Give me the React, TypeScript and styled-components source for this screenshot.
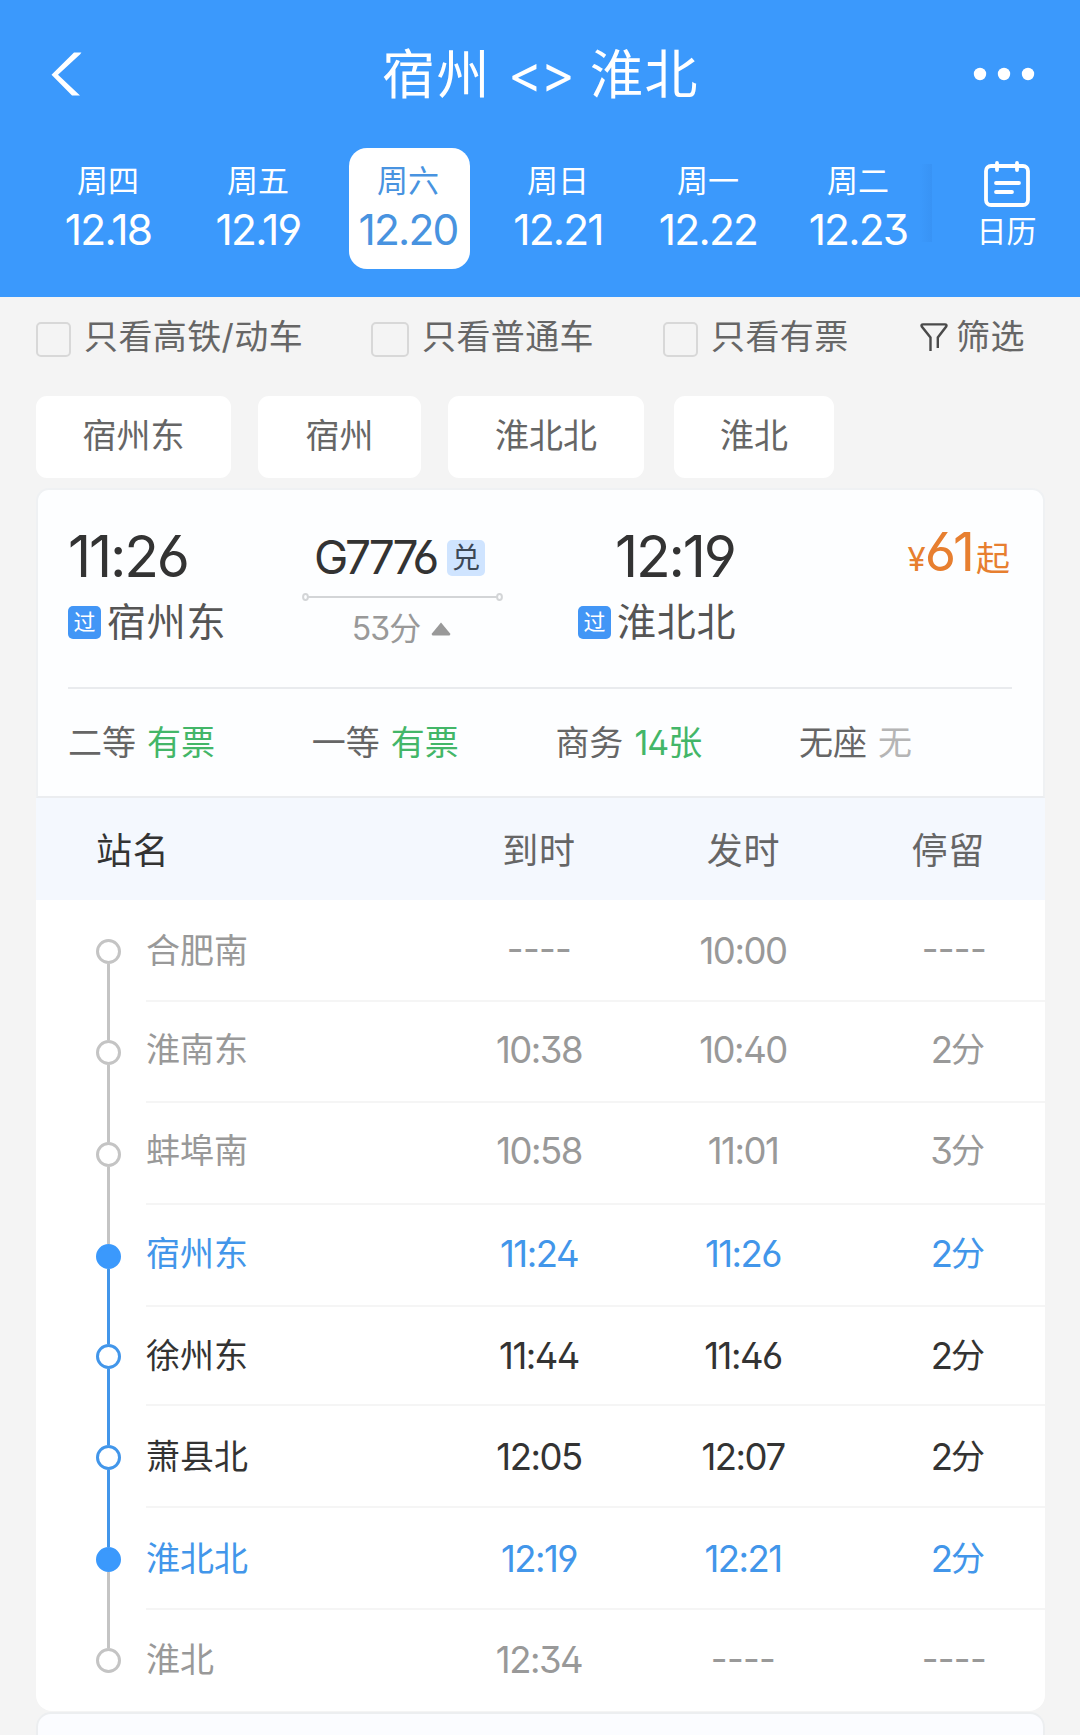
import React from "react";
import styled, { createGlobalStyle } from "styled-components";

const BLUE = "#3b99fc";

const GlobalStyle = createGlobalStyle`
  *, *::before, *::after { box-sizing: border-box; }
  html, body { margin: 0; padding: 0; background: #f4f4f4; }
  body {
    width: 1080px;
    height: 1735px;
    overflow: hidden;
    font-family: Inter, "Noto Sans CJK SC", sans-serif;
    font-feature-settings: "ss01" 1;
    color: #333;
  }
  svg { flex: none; }
`;

const Page = styled.div`
  width: 1080px;
  height: 1735px;
  overflow: hidden;
  display: flex;
  flex-direction: column;
  background: #f4f4f4;

  > * { flex: none; }
`;

const Header = styled.header`
  height: 297px;
  background: ${BLUE};
  color: #fff;
`;

const TitleBar = styled.div`
  height: 148px;
  padding: 0 44px 0 50px;
  display: grid;
  grid-template-columns: 64px 1fr 64px;
  align-items: center;
`;

const Title = styled.h1`
  margin: 0;
  padding: 2px 5px 0 0;
  display: flex;
  justify-content: center;
  align-items: center;
  gap: 17px;
  font-size: 53px;
  line-height: 80px;
  font-weight: 400;
  letter-spacing: 1.5px;
`;

const Arrows = styled.span`
  padding-bottom: 3px;
  font-size: 52px;
  letter-spacing: -2px;
`;

const DateBar = styled.div`
  height: 121px;
  display: flex;
  padding-left: 34px;
`;

const DateCell = styled.div`
  width: 150px;
  flex: none;
  display: flex;
  justify-content: center;
`;

const DateBox = styled.div<{ $active?: boolean }>`
  width: 121px;
  height: 121px;
  border-radius: 18px;
  padding: 12px 2px 0 0;
  display: flex;
  flex-direction: column;
  align-items: center;
  background: ${(p) => (p.$active ? "#fff" : "transparent")};
  color: ${(p) => (p.$active ? "#4893e0" : "#fff")};
`;

const Weekday = styled.span`
  font-size: 31px;
  line-height: 41px;
`;

const DayNumber = styled.span`
  font-size: 42.5px;
  font-weight: 390;
  line-height: 58px;
  letter-spacing: -1.8px;
  white-space: nowrap;
`;

const CalendarButton = styled.div`
  flex: 1;
  padding: 13px 0 0 1px;
  display: flex;
  flex-direction: column;
  align-items: center;
  font-size: 30px;
  line-height: 40px;
`;

const DateShade = styled.div`
  width: 12px;
  height: 78px;
  margin: 16px 0 0 -14px;
  background: linear-gradient(90deg, rgba(40, 110, 200, 0), rgba(40, 110, 200, 0.14));
`;

const CalendarLabel = styled.span`
  margin-top: 4px;
`;

const Filters = styled.div`
  height: 99px;
  padding: 17px 0 0 36px;
  display: flex;
  align-items: flex-start;
  color: #666;
  font-size: 34px;
  line-height: 46px;
`;

const FilterItem = styled.div<{ $width: number }>`
  width: ${(p) => p.$width}px;
  display: flex;
  letter-spacing: 0.4px;
  white-space: nowrap;
`;

const Checkbox = styled.span<{ $width?: number }>`
  width: ${(p) => p.$width ?? 35}px;
  height: 35px;
  margin: 8px 13px 0 0;
  border: 2px solid #d8d8d8;
  border-radius: 5px;
`;

const FilterIconBox = styled.span`
  width: 36px;
  padding-top: 9px;
  line-height: 0;
`;

const Stations = styled.div`
  height: 82px;
  padding-left: 36px;
  display: flex;
`;

const StationTab = styled.div<{ $width: number; $gap: number }>`
  width: ${(p) => p.$width}px;
  margin-right: ${(p) => p.$gap}px;
  padding-bottom: 8px;
  display: flex;
  align-items: center;
  justify-content: center;
  border-radius: 11px;
  background: #fff;
  color: #666;
  font-size: 34px;
`;

const TrainCard = styled.section`
  height: 310px;
  margin: 10px 36px 0;
  width: 1009px;
  padding: 0 31px 0 30px;
  border: 2px solid #eff1f3;
  border-bottom-color: #ebedf0;
  border-radius: 13px 13px 0 0;
  background: #fdfeff;
`;

const TrainInfo = styled.div`
  height: 199px;
  padding-top: 33px;
  border-bottom: 2px solid #e9ebee;
  display: grid;
  grid-template-columns: 234px 276px 1fr 110px;
`;

const Endpoint = styled.div<{ $indent?: number }>`
  display: flex;
  flex-direction: column;
  font-size: 57px;

  > :first-child { margin-left: ${(p) => p.$indent ?? 0}px; }
`;

const Time = styled.span`
  line-height: 67px;
  letter-spacing: -2.2px;
  white-space: nowrap;
`;

const StationLine = styled.span`
  display: flex;
  align-items: center;
  height: 62px;
  padding-bottom: 4px;
  color: #555;
  font-size: 39px;
  letter-spacing: 0.8px;
  white-space: nowrap;
`;

const PassTag = styled.span`
  width: 33px;
  height: 33px;
  margin: 7px 6px 0 0;
  display: grid;
  place-items: center;
  border-radius: 5px;
  background: #4296f6;
  color: #fff;
  font-size: 22px;
  line-height: 33px;
  letter-spacing: 0;
`;

const Journey = styled.div`
  width: 202px;
  display: flex;
  flex-direction: column;
  align-items: center;
`;

const TrainCode = styled.div`
  height: 69px;
  padding: 0 0 1px 12px;
  align-self: flex-start;
  display: flex;
  align-items: center;
  font-size: 46px;
  font-weight: 380;
  letter-spacing: -3.2px;
`;

const ExchangeTag = styled.span`
  width: 38px;
  height: 36px;
  margin: 1px 0 0 11px;
  display: grid;
  place-items: center;
  border-radius: 5px;
  background: #cfe4ff;
  color: #3c4856;
  font-size: 28px;
  font-weight: 400;
  line-height: 36px;
  letter-spacing: 0;
`;

const Duration = styled.div`
  padding: 3px 3px 0 0;
  display: flex;
  align-items: center;
  gap: 11px;
  color: #999;
  font-size: 32px;
  line-height: 48px;
  letter-spacing: -1px;
`;

const Price = styled.div`
  display: flex;
  align-items: baseline;
  justify-content: flex-end;
  padding-right: 2px;
  margin-top: -2px;
  color: #e77f30;
  white-space: nowrap;
  line-height: 62px;
`;

const PriceSign = styled.span`
  font-size: 33px;
  letter-spacing: -1px;
`;

const PriceValue = styled.span`
  font-size: 54px;
  font-weight: 430;
  letter-spacing: -3px;
`;

const PriceSuffix = styled.span`
  margin-left: 4px;
  font-size: 34px;
`;

const Seats = styled.div`
  height: 107px;
  padding-bottom: 5px;
  display: grid;
  grid-template-columns: repeat(4, 243.7px);
  align-items: center;
  font-size: 34px;
  white-space: nowrap;
`;

const Seat = styled.div`
  display: flex;
  gap: 11px;
  color: #666;
`;

const SeatState = styled.span<{ $sold?: boolean }>`
  color: ${(p) => (p.$sold ? "#b5b5b5" : "#43b668")};
`;

const SeatCount = styled.span`
  letter-spacing: -1px;
`;

const Table = styled.section`
  width: 1009px;
  height: 913px;
  margin-left: 36px;
  border-radius: 0 0 16px 16px;
  background: #fff;
`;

const TableHead = styled.div`
  height: 102px;
  padding: 0 60px 2px 60px;
  display: grid;
  grid-template-columns: 341px 204px 205px 1fr;
  align-items: center;
  background: #f4f8fe;
  color: #666;
  font-size: 36px;
  letter-spacing: 0.7px;
  text-align: center;

  > :first-child { text-align: left; color: #333; }
  > :last-child { text-align: right; }
`;

const StopRow = styled.div<{ $height: number }>`
  height: ${(p) => p.$height}px;
  padding-left: 60px;
  display: flex;
`;

const Rail = styled.div`
  width: 25px;
  margin-right: 25px;
  display: flex;
  flex-direction: column;
  align-items: center;
`;

const RailLine = styled.span<{ $color: string }>`
  width: 3px;
  flex: 1;
  background: ${(p) => p.$color};
`;

const RailDot = styled.span<{ $color: string; $filled?: boolean }>`
  width: 25px;
  height: 25px;
  border: 3px solid ${(p) => p.$color};
  border-radius: 50%;
  background: ${(p) => (p.$filled ? p.$color : "#fff")};
`;

const StopCells = styled.div<{ $color: string; $lift: number; $last: boolean }>`
  flex: 1;
  padding: 1px 61px ${(p) => p.$lift}px 0;
  display: grid;
  grid-template-columns: 291px 204px 204px 1fr;
  align-items: center;
  border-bottom: 2px solid ${(p) => (p.$last ? "transparent" : "#f5f5f5")};
  color: ${(p) => p.$color};
  font-size: 34px;
  line-height: 50px;
`;

const StopTime = styled.span`
  font-size: 36.5px;
  font-weight: 370;
  letter-spacing: -1.5px;
  text-align: center;
`;

const Dashes = styled.span`
  display: block;
  padding-bottom: 3px;
  letter-spacing: -0.7px;
`;

const Stay = styled.span<{ $empty: boolean }>`
  display: flex;
  justify-content: flex-end;
  margin-right: ${(p) => (p.$empty ? -2 : -1)}px;
`;

const StayNumber = styled.span`
  font-size: 36.5px;
  font-weight: 370;
  letter-spacing: -2px;
`;

const NextCard = styled.section`
  width: 1009px;
  height: 40px;
  margin: 1px 0 0 36px;
  border: 2px solid #eceef0;
  border-radius: 15px 15px 0 0;
  background: #fbfcff;
`;

const BackIcon = () => (
  <svg width="34" height="50" viewBox="0 0 34 50" fill="none">
    <path d="M28.500 4.500H31L8 25.800 30 46.500H22L1.500 25.800 24 3.500H31.500L8 25.800Z" fill="#fff" />
  </svg>
);

const MoreIcon = () => (
  <svg width="64" height="16" viewBox="0 0 64 16" fill="#fff">
    <circle cx="8" cy="8" r="6.2" />
    <circle cx="32" cy="8" r="6.2" />
    <circle cx="56" cy="8" r="6.2" />
  </svg>
);

const CalendarIcon = () => (
  <svg width="46" height="46" viewBox="0 0 46 46" fill="none" stroke="#fff" strokeWidth="3.8" strokeLinecap="round">
    <rect x="2" y="5" width="42" height="39" rx="5" />
    <path d="M13 2v7M33 2v7M12 22h23M12 31h16" />
  </svg>
);

const FunnelIcon = () => (
  <svg width="28" height="29" viewBox="0 0 28 29" fill="none" stroke="#4a4a4a" strokeWidth="2.4">
    <path d="M10.5 28V14.5L1.8 3.6Q.8 1.4 3 1.4H25Q27.2 1.4 26.2 3.6L17.8 14.5V25" />
  </svg>
);

const RouteLine = () => (
  <svg width="202" height="10" viewBox="0 0 202 10" fill="none" stroke="#d3d5d7" strokeWidth="2">
    <ellipse cx="3.5" cy="5" rx="2.4" ry="3" />
    <ellipse cx="197.500" cy="5" rx="2.4" ry="3" />
    <path d="M6 5H195" />
  </svg>
);

const Triangle = () => (
  <svg width="20" height="14" viewBox="0 0 20 14">
    <path d="M10 .5 19.500 12 18.500 13.500H1.500L.5 12Z" fill="#999" />
  </svg>
);

const dates = [
  ["周四", "12.18"],
  ["周五", "12.19"],
  ["周六", "12.20"],
  ["周日", "12.21"],
  ["周一", "12.22"],
  ["周二", "12.23"],
];

const seats = [
  { name: "二等", state: "有票" },
  { name: "一等", state: "有票" },
  { name: "商务", count: "14", state: "张" },
  { name: "无座", state: "无", sold: true },
];

const tabs = [
  { name: "宿州东", width: 195, gap: 27 },
  { name: "宿州", width: 163, gap: 27 },
  { name: "淮北北", width: 196, gap: 30 },
  { name: "淮北", width: 160, gap: 0 },
];

const GREY = "#999";
const DARK = "#333";
const LINE = "#c4c4c4";
const NONE = "transparent";
const LINK = "#4296ea";

const stops = [
  { name: "合肥南", arrive: "", leave: "10:00", stay: "", color: GREY, dot: LINE, up: NONE, down: LINE, height: 102, lift: 0 },
  { name: "淮南东", arrive: "10:38", leave: "10:40", stay: "2", color: GREY, dot: LINE, up: LINE, down: LINE, height: 101, lift: 5 },
  { name: "蚌埠南", arrive: "10:58", leave: "11:01", stay: "3", color: GREY, dot: LINE, up: LINE, down: LINE, height: 102, lift: 5 },
  { name: "宿州东", arrive: "11:24", leave: "11:26", stay: "2", color: LINK, dot: BLUE, up: LINE, down: LINK, height: 102, lift: 4, filled: true },
  { name: "徐州东", arrive: "11:44", leave: "11:46", stay: "2", color: DARK, dot: LINK, up: LINK, down: LINK, height: 99, lift: 0 },
  { name: "萧县北", arrive: "12:05", leave: "12:07", stay: "2", color: DARK, dot: LINK, up: LINK, down: LINK, height: 102, lift: 0 },
  { name: "淮北北", arrive: "12:19", leave: "12:21", stay: "2", color: LINK, dot: BLUE, up: LINK, down: LINE, height: 102, lift: 0, filled: true },
  { name: "淮北", arrive: "12:34", leave: "", stay: "", color: GREY, dot: LINE, up: LINE, down: NONE, height: 101, lift: 0 },
];

const TimeCell = ({ value }: { value: string }) => (
  <StopTime>{value || <Dashes>----</Dashes>}</StopTime>
);

export default function App() {
  return (
    <Page>
      <GlobalStyle />
      <Header>
        <TitleBar>
          <BackIcon />
          <Title>
            <span>宿州</span>
            <Arrows>&lt;&gt;</Arrows>
            <span>淮北</span>
          </Title>
          <MoreIcon />
        </TitleBar>
        <DateBar>
          {dates.map(([day, date]) => (
            <DateCell key={date}>
              <DateBox $active={date === "12.20"}>
                <Weekday>{day}</Weekday>
                <DayNumber>{date}</DayNumber>
              </DateBox>
            </DateCell>
          ))}
          <DateShade />
          <CalendarButton>
            <CalendarIcon />
            <CalendarLabel>日历</CalendarLabel>
          </CalendarButton>
        </DateBar>
      </Header>

      <Filters>
        <FilterItem $width={335}><Checkbox />只看高铁/动车</FilterItem>
        <FilterItem $width={292}><Checkbox $width={38} />只看普通车</FilterItem>
        <FilterItem $width={257}><Checkbox />只看有票</FilterItem>
        <FilterItem $width={110}><FilterIconBox><FunnelIcon /></FilterIconBox>筛选</FilterItem>
      </Filters>

      <Stations>
        {tabs.map((t) => (
          <StationTab key={t.name} $width={t.width} $gap={t.gap}>{t.name}</StationTab>
        ))}
      </Stations>

      <TrainCard>
        <TrainInfo>
          <Endpoint>
            <Time>11:26</Time>
            <StationLine><PassTag>过</PassTag>宿州东</StationLine>
          </Endpoint>
          <Journey>
            <TrainCode>G7776<ExchangeTag>兑</ExchangeTag></TrainCode>
            <RouteLine />
            <Duration>53分<Triangle /></Duration>
          </Journey>
          <Endpoint $indent={37}>
            <Time>12:19</Time>
            <StationLine><PassTag>过</PassTag>淮北北</StationLine>
          </Endpoint>
          <Price>
            <PriceSign>¥</PriceSign>
            <PriceValue>61</PriceValue>
            <PriceSuffix>起</PriceSuffix>
          </Price>
        </TrainInfo>
        <Seats>
          {seats.map((s) => (
            <Seat key={s.name}>
              <span>{s.name}</span>
              <SeatState $sold={s.sold}>
                {s.count && <SeatCount>{s.count}</SeatCount>}
                {s.state}
              </SeatState>
            </Seat>
          ))}
        </Seats>
      </TrainCard>

      <Table>
        <TableHead>
          <span>站名</span>
          <span>到时</span>
          <span>发时</span>
          <span>停留</span>
        </TableHead>
        {stops.map((s, i) => (
          <StopRow key={s.name} $height={s.height}>
            <Rail>
              <RailLine $color={s.up} />
              <RailDot $color={s.dot} $filled={s.filled} />
              <RailLine $color={s.down} />
            </Rail>
            <StopCells $color={s.color} $lift={s.lift} $last={i === stops.length - 1}>
              <span>{s.name}</span>
              <TimeCell value={s.arrive} />
              <TimeCell value={s.leave} />
              <Stay $empty={!s.stay}>
                {s.stay ? <><StayNumber>{s.stay}</StayNumber>分</> : <TimeCell value="" />}
              </Stay>
            </StopCells>
          </StopRow>
        ))}
      </Table>
      <NextCard />
    </Page>
  );
}
